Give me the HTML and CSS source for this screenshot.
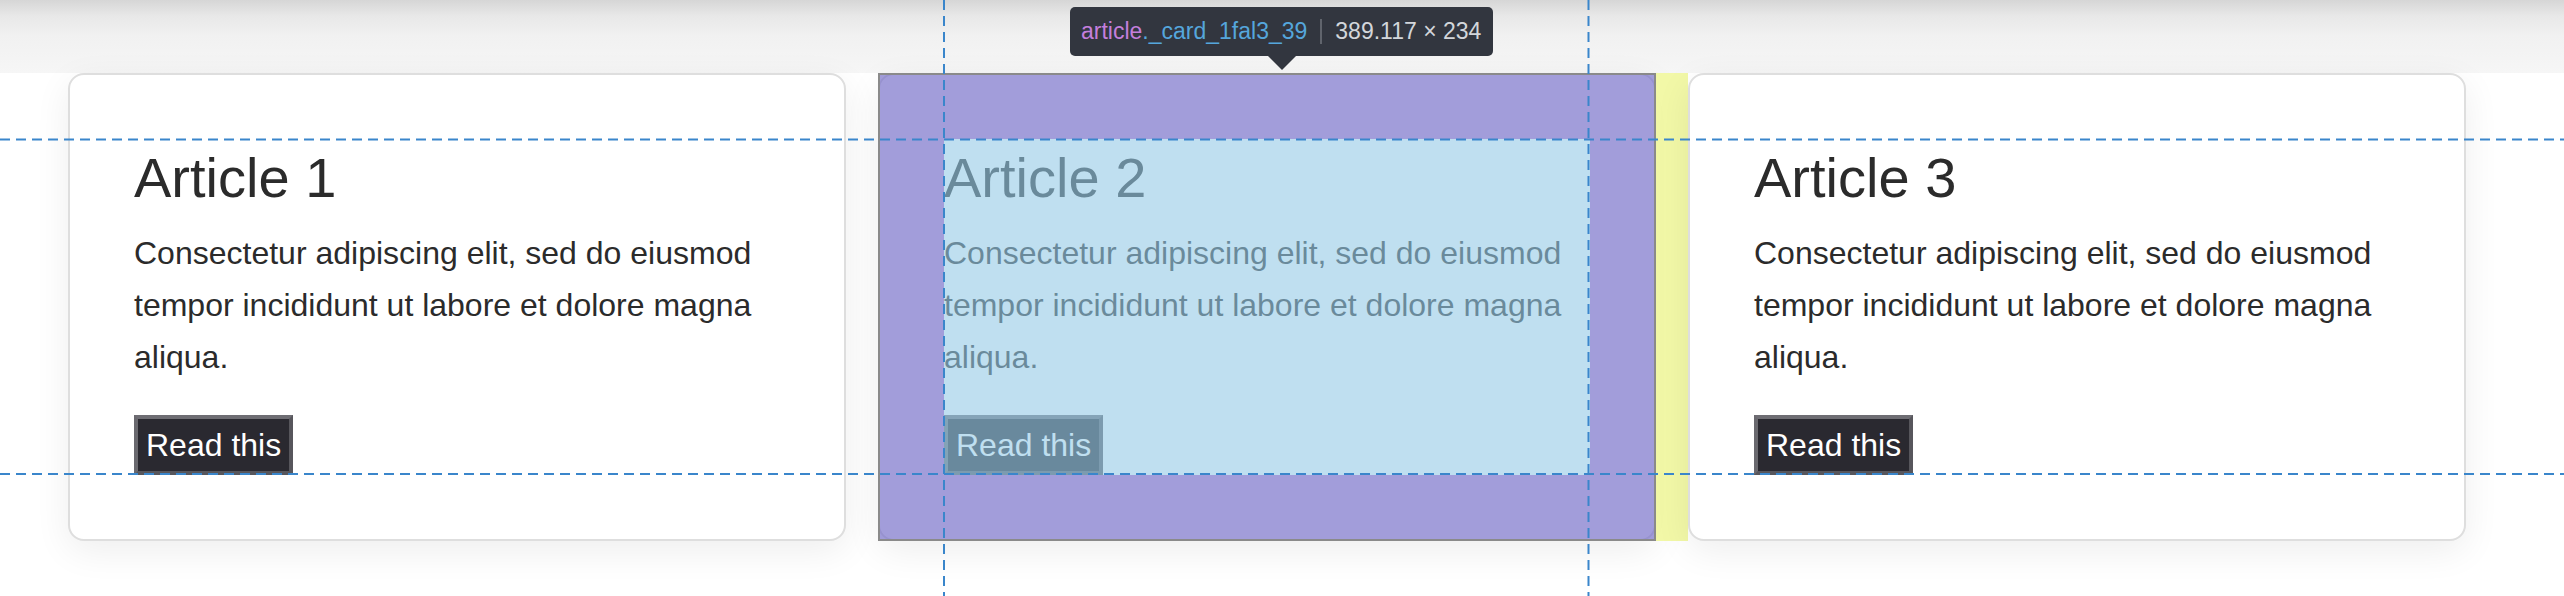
FILE: index.html
```html
<!DOCTYPE html>
<html lang="en">
<head>
<meta charset="utf-8">
<title>Cards</title>
<link rel="stylesheet" href="styles.css">
</head>
<body>
<div class="page">
  <div class="topbar"></div>
  <main class="cards">
    <article class="card">
      <h2 class="card-title">Article 1</h2>
      <p class="card-text">Consectetur adipiscing elit, sed do eiusmod tempor incididunt ut labore et dolore magna aliqua.</p>
      <button class="card-btn">Read this</button>
    </article>
    <article class="card card--inspected">
      <h2 class="card-title">Article 2</h2>
      <p class="card-text">Consectetur adipiscing elit, sed do eiusmod tempor incididunt ut labore et dolore magna aliqua.</p>
      <button class="card-btn">Read this</button>
      <div class="hl"><div class="hl-pad"></div></div>
      <div class="hl-margin"></div>
    </article>
    <article class="card">
      <h2 class="card-title">Article 3</h2>
      <p class="card-text">Consectetur adipiscing elit, sed do eiusmod tempor incididunt ut labore et dolore magna aliqua.</p>
      <button class="card-btn">Read this</button>
    </article>
  </main>
  <div class="tooltip">
    <span class="tt-tag">article</span><span class="tt-class">._card_1fal3_39</span>
    <span class="tt-sep"></span>
    <span class="tt-dims">389.117 × 234</span>
  </div>
  <svg class="guides" width="2564" height="596" viewBox="0 0 2564 596">
    <g stroke="#3a86cb" stroke-width="2" stroke-dasharray="10 6" fill="none">
      <line x1="0" y1="139.5" x2="2564" y2="139.5"/>
      <line x1="0" y1="474" x2="2564" y2="474"/>
      <line x1="944" y1="0" x2="944" y2="596"/>
      <line x1="1588.5" y1="0" x2="1588.5" y2="596"/>
    </g>
  </svg>
</div>
</body>
</html>
```
FILE: styles.css
```css
html, body {
  margin: 0;
  padding: 0;
  background: #ffffff;
}

.page {
  position: relative;
  width: 2564px;
  height: 596px;
  overflow: hidden;
  font-family: "Liberation Sans", Arial, sans-serif;
  color: #2b2b2b;
}

.topbar {
  height: 73px;
  background: linear-gradient(#d6d6d6 0px, #e8e8e8 16px, #f1f1f1 36px, #f6f6f6 73px);
}

.cards {
  display: flex;
  gap: 32px;
  padding-left: 68px;
}

.card {
  position: relative;
  flex: none;
  width: 778px;
  box-sizing: border-box;
  display: flex;
  flex-direction: column;
  align-items: flex-start;
  padding: 64px;
  background: #ffffff;
  border: 2px solid #dedede;
  border-radius: 16px;
  box-shadow: 0 10px 36px rgba(0, 0, 0, 0.07);
}

.card-title {
  margin: 0 0 10px;
  font-size: 56px;
  line-height: 78px;
  font-weight: 400;
  color: #2b2b2b;
}

.card-text {
  margin: 0 0 32px;
  font-size: 32px;
  line-height: 52px;
  color: #2b2b2b;
}

.card-btn {
  height: 60px;
  box-sizing: border-box;
  margin: 0;
  padding: 0 8px;
  font-family: "Liberation Sans", Arial, sans-serif;
  font-size: 32px;
  line-height: 52px;
  color: #ffffff;
  background: #2a2930;
  border: 4px solid;
  border-color: #6e6d73 #57565c #57565c #6a696f;
  border-radius: 0;
}

/* inspector highlight overlay */
.hl {
  position: absolute;
  top: -2px;
  left: -2px;
  right: -2px;
  bottom: -2px;
  border: 2px solid #8a8a8a;
}

.hl-pad {
  height: 100%;
  box-sizing: border-box;
  border: 64px solid rgba(118, 111, 201, 0.68);
  background: rgba(149, 201, 230, 0.6);
  background-clip: padding-box;
}

.hl-margin {
  position: absolute;
  top: -2px;
  bottom: -2px;
  right: -34px;
  width: 32px;
  background: rgba(240, 247, 152, 0.85);
}

.tooltip {
  position: absolute;
  left: 1070px;
  top: 7px;
  height: 49px;
  box-sizing: border-box;
  display: flex;
  align-items: center;
  padding: 0 12px 0 11px;
  background: #32363f;
  border-radius: 5px;
  font-size: 23px;
  white-space: nowrap;
}

.tooltip::after {
  content: "";
  position: absolute;
  left: 198px;
  top: 49px;
  border-left: 14px solid transparent;
  border-right: 14px solid transparent;
  border-top: 14px solid #32363f;
}

.tt-tag {
  color: #c47fdc;
}

.tt-class {
  color: #55a6dc;
}

.tt-sep {
  width: 2px;
  height: 25px;
  margin: 0 13px;
  background: #60646c;
}

.tt-dims {
  color: #d3d6db;
}

.guides {
  position: absolute;
  left: 0;
  top: 0;
  pointer-events: none;
}
```
